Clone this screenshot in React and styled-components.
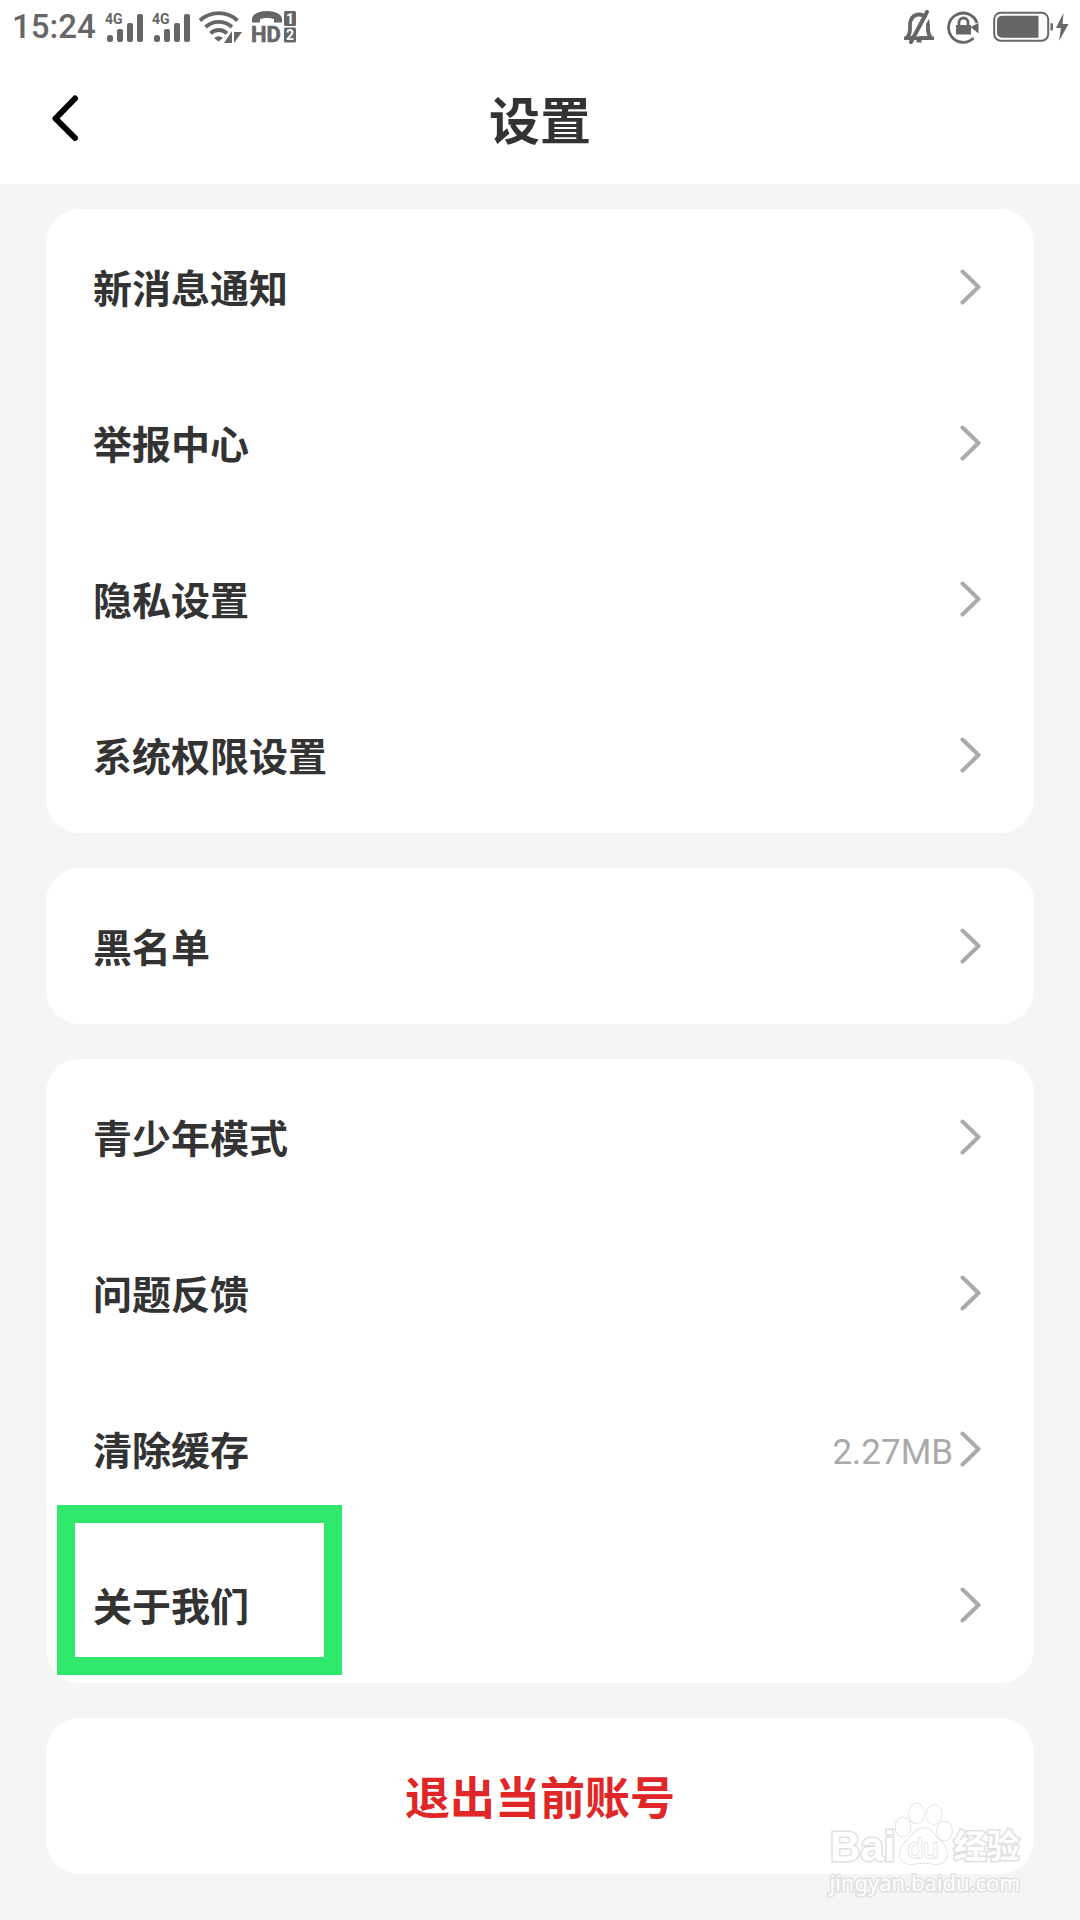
import React from 'react';
import styled, { createGlobalStyle } from 'styled-components';

const GlobalStyle = createGlobalStyle`
  * {
    box-sizing: border-box;
  }
  body {
    margin: 0;
    background: #f5f5f5;
    color: #333333;
    font-family: Roboto, 'Noto Sans CJK SC', sans-serif;
  }
  button {
    font-family: inherit;
    border: 0;
    padding: 0;
    background: none;
    cursor: pointer;
  }
`;

const Page = styled.div`
  position: relative;
  padding-bottom: 46px;
`;

const StatusBar = styled.div`
  display: flex;
  align-items: center;
  justify-content: space-between;
  height: 54px;
  padding: 0 11px 0 12px;
  background: #ffffff;
  color: #666666;
`;

const StatusGroup = styled.div`
  display: flex;
  align-items: center;
  gap: ${(props) => props.$gap}px;
`;

const Clock = styled.time`
  font-size: 33px;
  line-height: 40px;
  font-weight: 500;
`;

const Glyph = styled.svg`
  display: block;
  flex: none;
  fill: currentColor;
  font-family: Roboto, sans-serif;
  font-weight: 700;
`;

const Header = styled.header`
  display: grid;
  grid-template-columns: 1fr auto 1fr;
  align-items: center;
  height: 130px;
  padding: 0 50px;
  background: #ffffff;
`;

const BackButton = styled.button`
  justify-self: start;
  color: #000000;
`;

const Title = styled.h1`
  margin: 0;
  padding-top: 8px;
  font-size: 51px;
  line-height: 60px;
  font-weight: 700;
`;

const Content = styled.main`
  display: flex;
  flex-direction: column;
  gap: 35px;
  padding: 25px 46px 0;
`;

const Card = styled.section`
  display: flex;
  flex-direction: column;
  border-radius: 34px;
  background: #ffffff;
`;

const Row = styled.button`
  position: relative;
  display: flex;
  align-items: center;
  justify-content: space-between;
  height: 156px;
  padding: 0 52px 0 47px;
  color: #333333;
`;

const Label = styled.span`
  padding-top: 6px;
  font-size: 39px;
  line-height: 48px;
  font-weight: 700;
`;

const RowEnd = styled.span`
  display: flex;
  align-items: center;
  gap: 5px;
  color: #aaaaaa;
`;

const Value = styled.span`
  padding-top: 8px;
  font-size: 35px;
  line-height: 42px;
`;

const Highlight = styled.span`
  position: absolute;
  top: -22px;
  left: 11px;
  width: 285px;
  height: 170px;
  border: 18px solid #30e86b;
  pointer-events: none;
`;

const Logout = styled.button`
  height: 156px;
  border-radius: 34px;
  color: #e02626;
  font-size: 45px;
  line-height: 54px;
  font-weight: 700;
  && {
    padding-top: 8px;
    background: #ffffff;
  }
`;

const Watermark = styled.div`
  position: absolute;
  right: 60px;
  bottom: 24px;
  display: flex;
  flex-direction: column;
  align-items: center;
  color: #ffffff;
  pointer-events: none;
  paint-order: stroke fill;
  -webkit-text-stroke: 3px #e0e0e0;
`;

const WatermarkLogo = styled.div`
  display: flex;
  align-items: flex-end;
`;

const Brand = styled.span`
  font-family: 'Liberation Sans', 'Noto Sans CJK SC', sans-serif;
  font-size: ${(props) => props.$size}px;
  line-height: 42px;
  font-weight: 700;
`;

const Site = styled.span`
  font-family: 'Noto Sans', sans-serif;
  font-size: 22px;
  line-height: 28px;
`;

const groups = [
  [
    { label: '新消息通知' },
    { label: '举报中心' },
    { label: '隐私设置' },
    { label: '系统权限设置' },
  ],
  [{ label: '黑名单' }],
  [
    { label: '青少年模式' },
    { label: '问题反馈' },
    { label: '清除缓存', value: '2.27MB' },
    { label: '关于我们', highlighted: true },
  ],
];

const Signal = () => (
  <Glyph width="38" height="32" viewBox="0 0 38 32">
    <text x="0" y="13" fontSize="14">4G</text>
    <rect x="2" y="24" width="6" height="7" rx="2.5" />
    <rect x="12" y="18" width="6" height="13" rx="2" />
    <rect x="22" y="12" width="6" height="19" rx="2" />
    <rect x="32" y="3" width="6" height="28" rx="2" />
  </Glyph>
);

const Wifi = () => (
  <Glyph width="43" height="32" viewBox="0 0 43 32">
    <g fill="none" stroke="currentColor" strokeWidth="3.8">
      <path d="M1 9.500a27.500 27.500 0 0 1 37.500 0" />
      <path d="M6.500 16a19.500 19.500 0 0 1 26.500 0" />
      <path d="M11.500 22.300a12 12 0 0 1 16.500 0" />
    </g>
    <path d="M15 27a7 7 0 0 1 9 0l-4.500 3.500z" />
    <path d="M33 20v12h-8zM35 21h8l-8 11z" stroke="#ffffff" strokeWidth="2" paintOrder="stroke" />
  </Glyph>
);

const HdCall = () => (
  <Glyph width="46" height="40" viewBox="0 -4 46 40">
    <path d="M1 11.500V8C1 3 8 0 16 0s15 3 15 8v3.500h-8V8c-4-1.500-10-1.500-14 0v3.500z" />
    <text x="0" y="31" fontSize="22" stroke="currentColor" strokeWidth=".6">HD</text>
    <rect x="33" y="0" width="12" height="15" rx="1.500" />
    <rect x="33" y="16.500" width="12" height="15" rx="1.500" />
    <g fill="#ffffff" fontSize="14" textAnchor="middle">
      <text x="39" y="12.500">1</text>
      <text x="39" y="29">2</text>
    </g>
  </Glyph>
);

const Muted = () => (
  <Glyph width="30" height="34" viewBox="0 0 30 34">
    <path d="M3 28c2.500-3 3-5 3-9v-4c0-6 3.500-10.500 9-10.500s9 4.500 9 10.500v4c0 4 .5 6 3 9z" fill="none" stroke="currentColor" strokeWidth="3.800" strokeLinejoin="round" />
    <path d="M10 32 26 4" fill="none" stroke="#ffffff" strokeWidth="3" />
    <path d="M0 26.500h30v3.500H0z" />
    <path d="M7 32 23 2" fill="none" stroke="currentColor" strokeWidth="4" strokeLinecap="round" />
    <path d="M12.500 29.500h5v3h-5z" />
  </Glyph>
);

const RotationLock = () => (
  <Glyph width="33" height="34" viewBox="0 0 33 34">
    <path d="M26.500 28a14.600 14.600 0 1 1 3.500-15" fill="none" stroke="currentColor" strokeWidth="2.800" />
    <path d="M23.500 17l8-4v10.500z" />
    <path d="M9 15h15v9.500H9z" />
    <path d="M12 16v-3.500a4.500 4.500 0 0 1 9 0V16" fill="none" stroke="currentColor" strokeWidth="2.800" />
  </Glyph>
);

const Battery = () => (
  <Glyph width="76" height="32" viewBox="0 0 76 32">
    <rect x="1.200" y="1.700" width="54" height="28" rx="6.500" fill="none" stroke="currentColor" strokeWidth="2" />
    <path d="M9 4.700h36.500v22H9a5 5 0 0 1-5-5v-12a5 5 0 0 1 5-5z" />
    <path d="M57.500 12h1a1.500 1.500 0 0 1 1.500 1.500v4.500a1.500 1.500 0 0 1-1.500 1.500h-1z" />
    <path d="M70.500 2 63 17h5l-2 13 9.500-17h-6z" />
  </Glyph>
);

const Chevron = () => (
  <svg width="24" height="36" viewBox="0 0 24 36" fill="none" stroke="currentColor" strokeWidth="4" strokeLinecap="round" strokeLinejoin="round">
    <path d="M4.500 2.500 20.500 18l-16 15.500" />
  </svg>
);

const Paw = () => (
  <svg width="58" height="66" viewBox="2 0 58 66" fill="#ffffff" stroke="#dddddd" strokeWidth="1.500">
    <ellipse cx="10" cy="25" rx="7.500" ry="9.500" />
    <ellipse cx="23.500" cy="11.500" rx="7.500" ry="10" />
    <ellipse cx="41" cy="12.500" rx="7.500" ry="9.500" transform="rotate(8 41 12.500)" />
    <ellipse cx="51.500" cy="29" rx="7.500" ry="9.500" />
    <path d="M20 32c6-8 16-8 21 0 4 6 13 10 13 20 0 8-7 11-13 10-7-1.500-14-1.500-21 0-6 1-13-2-13-10 0-10 9-14 13-20z" />
    <text x="30" y="56" fontSize="28" fontFamily="Liberation Sans, sans-serif" textAnchor="middle">du</text>
  </svg>
);

const App = () => {
  return (
    <>
      <GlobalStyle />
      <Page>
        <StatusBar>
          <StatusGroup $gap={9}>
            <Clock>15:24</Clock>
            <Signal />
            <Signal />
            <Wifi />
            <HdCall />
          </StatusGroup>
          <StatusGroup $gap={13}>
            <Muted />
            <RotationLock />
            <Battery />
          </StatusGroup>
        </StatusBar>
        <Header>
          <BackButton aria-label="返回">
            <svg width="30" height="46" viewBox="0 0 30 46" fill="none" stroke="currentColor" strokeWidth="6" strokeLinecap="round" strokeLinejoin="round">
              <path d="M25 3.500 5.500 23.500 25 43" />
            </svg>
          </BackButton>
          <Title>设置</Title>
        </Header>
        <Content>
          {groups.map((rows) => (
            <Card key={rows[0].label}>
              {rows.map((row) => (
                <Row key={row.label}>
                  <Label>{row.label}</Label>
                  <RowEnd>
                    {row.value && <Value>{row.value}</Value>}
                    <Chevron />
                  </RowEnd>
                  {row.highlighted && <Highlight />}
                </Row>
              ))}
            </Card>
          ))}
          <Logout>退出当前账号</Logout>
        </Content>
        <Watermark>
          <WatermarkLogo>
            <Brand $size={42}>Bai</Brand>
            <Paw />
            <Brand $size={33}>经验</Brand>
          </WatermarkLogo>
          <Site>jingyan.baidu.com</Site>
        </Watermark>
      </Page>
    </>
  );
};

export default App;
